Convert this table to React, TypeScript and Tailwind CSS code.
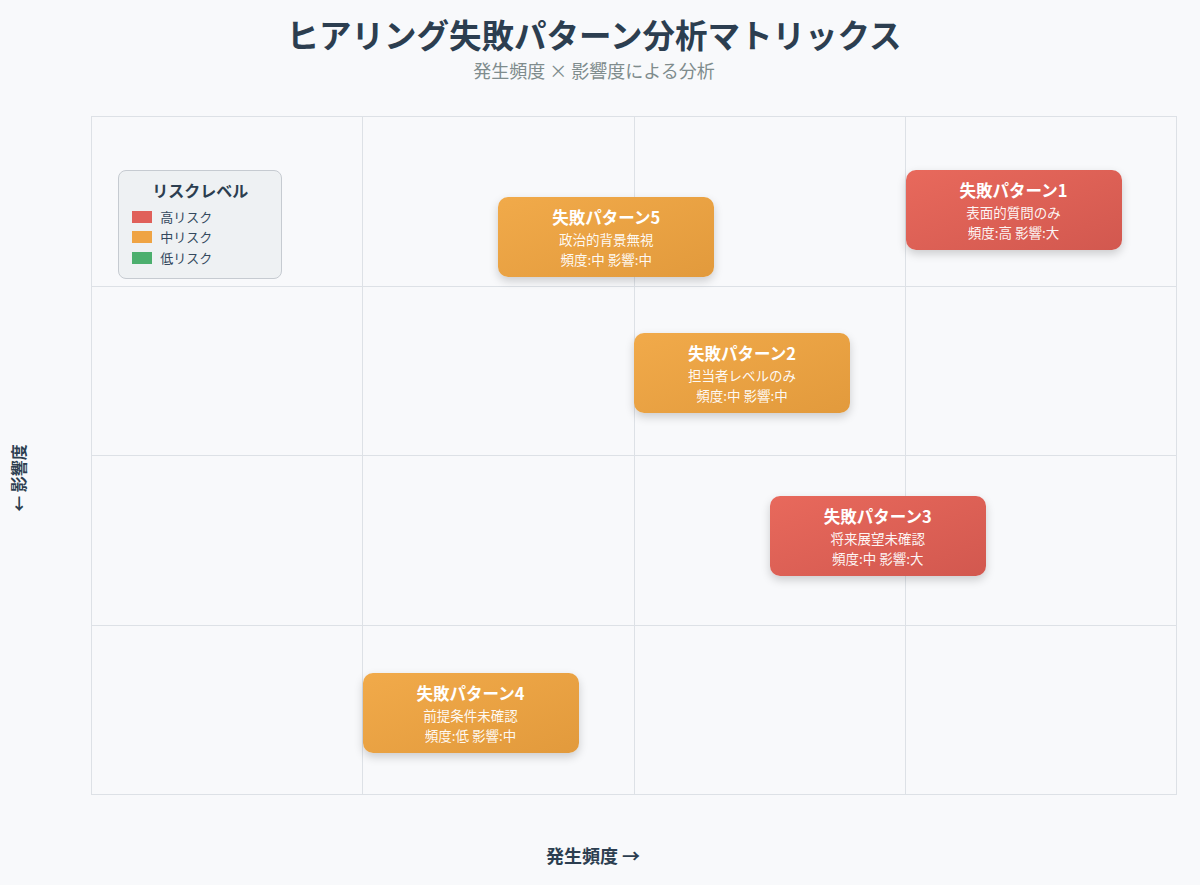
type Risk = 'high' | 'mid'

type Pattern = {
  id: number
  label: string
  freq: string
  impact: string
  risk: Risk
  left: string
  top: string
}

const PATTERNS: Pattern[] = [
  { id: 1, label: '表面的質問のみ', freq: '高', impact: '大', risk: 'high', left: 'left-[75%]', top: 'top-[8%]' },
  { id: 5, label: '政治的背景無視', freq: '中', impact: '中', risk: 'mid', left: 'left-[37.5%]', top: 'top-[12%]' },
  { id: 2, label: '担当者レベルのみ', freq: '中', impact: '中', risk: 'mid', left: 'left-[50%]', top: 'top-[32%]' },
  { id: 3, label: '将来展望未確認', freq: '中', impact: '大', risk: 'high', left: 'left-[62.5%]', top: 'top-[56%]' },
  { id: 4, label: '前提条件未確認', freq: '低', impact: '中', risk: 'mid', left: 'left-[25%]', top: 'top-[82%]' },
]

const RISK_BG: Record<Risk, string> = {
  high: 'bg-gradient-to-br from-[#e8695c] to-[#d2584f]',
  mid: 'bg-gradient-to-br from-[#f1aa4a] to-[#e29a3c]',
}

function PatternCard({ p }: { p: Pattern }) {
  return (
    <div
      className={`absolute ${p.left} ${p.top} w-[216px] h-[80px] rounded-[10px] ${RISK_BG[p.risk]} shadow-[0_4px_10px_rgba(0,0,0,0.18)] text-white text-center pt-[8px]`}
    >
      <div className="text-[16.5px] leading-[24px] font-bold">失敗パターン{p.id}</div>
      <div className="text-[13.5px] leading-[20px] text-white/95">{p.label}</div>
      <div className="text-[13.5px] leading-[20px] text-white/95">
        頻度:{p.freq} 影響:{p.impact}
      </div>
    </div>
  )
}

function Legend() {
  const items = [
    { name: '高リスク', color: 'bg-[#e0605a]' },
    { name: '中リスク', color: 'bg-[#efa444]' },
    { name: '低リスク', color: 'bg-[#4caf6e]' },
  ]
  return (
    <div className="absolute left-[2.5%] top-[8%] w-[164px] h-[109px] rounded-[8px] border border-[#c6cbd1] bg-[#eef1f3] pt-[9px] px-[13px]">
      <div className="text-center text-[16px] leading-[20px] font-bold text-[#2c3e50]">リスクレベル</div>
      <div className="mt-[6px] flex flex-col">
        {items.map((it) => (
          <div key={it.name} className="flex items-center gap-[8px] h-[20.5px]">
            <span className={`w-[20px] h-[12px] ${it.color}`} />
            <span className="text-[13px] text-[#34495e]">{it.name}</span>
          </div>
        ))}
      </div>
    </div>
  )
}

function Matrix() {
  return (
    <div className="relative w-[1086px] h-[679px]">
      <div className="grid grid-cols-4 grid-rows-4 gap-px p-px w-full h-full bg-[#dde1e6]">
        {Array.from({ length: 16 }).map((_, i) => (
          <div key={i} className="bg-[#f8f9fb]" />
        ))}
      </div>
      <Legend />
      {PATTERNS.map((p) => (
        <PatternCard key={p.id} p={p} />
      ))}
    </div>
  )
}

export default function App() {
  return (
    <div className="w-full min-h-[885px] bg-[#f8f9fb] font-['Noto_Sans_CJK_JP','Noto_Sans',sans-serif]">
      <div className="pt-[14px] pr-[12px] text-center">
        <h1 className="text-[32.5px] leading-[40px] font-bold text-[#2c3e50]">ヒアリング失敗パターン分析マトリックス</h1>
        <p className="mt-[5px] text-[18px] leading-[22px] text-[#7f8c8d]">発生頻度 × 影響度による分析</p>
      </div>
      <div className="mt-[35px] flex items-start">
        <div className="w-[36px] h-[723px] flex items-center justify-center">
          <div className="-rotate-90 whitespace-nowrap text-[16px] font-bold text-[#2c3e50]">←&nbsp;影響度</div>
        </div>
        <div className="ml-[55px]">
          <Matrix />
        </div>
      </div>
      <div className="mt-[4px] pr-[14px] text-center text-[18px] leading-[24px] font-bold text-[#2c3e50]">発生頻度 →</div>
    </div>
  )
}
